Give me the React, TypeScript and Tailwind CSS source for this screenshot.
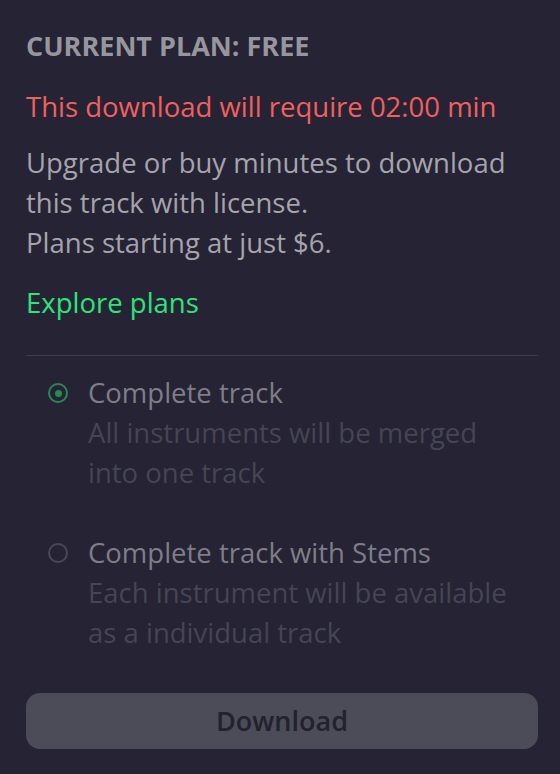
import React, { useState } from 'react';

type Option = {
  id: 'track' | 'stems';
  title: string;
  description: string;
};

const options: Option[] = [
  {
    id: 'track',
    title: 'Complete track',
    description: 'All instruments will be merged into one track',
  },
  {
    id: 'stems',
    title: 'Complete track with Stems',
    description: 'Each instrument will be available as a individual track',
  },
];

const Radio: React.FC<{ checked: boolean }> = ({ checked }) => (
  <span
    className={`mt-[10px] flex h-[20px] w-[20px] flex-shrink-0 items-center justify-center rounded-full border-2 ${
      checked ? 'border-[#2c8656]' : 'border-[#494857]'
    }`}
  >
    {checked && <span className="h-[7px] w-[7px] rounded-full bg-[#2c8656]" />}
  </span>
);

export default function App() {
  const [selected] = useState<Option['id']>('track');

  return (
    <div
      className="min-h-[774px] w-[560px] bg-[#252334] pl-[26px] pr-[22px] pt-[30px]"
      style={{ fontFamily: '"Open Sans", "Noto Sans", sans-serif' }}
    >
      {/* Plan */}
      <h2 className="text-[27px] font-bold leading-[32px] text-[#97969f]">
        CURRENT PLAN: FREE
      </h2>
      <p className="mt-[25px] text-[27.5px] leading-[40px] text-[#f0605f]">
        This download will require 02:00 min
      </p>
      <p className="mt-[16px] text-[27.5px] leading-[40px] text-[#a5a4ac]">
        Upgrade or buy minutes to download
        <br />
        this track with license.
        <br />
        Plans starting at just $6.
      </p>
      <a className="mt-[20px] block text-[27.5px] leading-[40px] text-[#2de37a]">Explore plans</a>

      <div className="mt-[32px] h-px bg-[#3d3c4b]" />

      {/* Options */}
      <div className="mt-[17px] flex flex-col gap-[40px]">
        {options.map((option) => (
          <div key={option.id} className="flex items-start gap-[20px] pl-[22px]">
            <Radio checked={selected === option.id} />
            <div className="w-[430px]">
              <div className="text-[27.5px] leading-[40px] text-[#7f7e88]">{option.title}</div>
              <div className="text-[27.5px] leading-[40px] text-[#464553]">{option.description}</div>
            </div>
          </div>
        ))}
      </div>

      <button className="mt-[40px] h-[56px] w-full rounded-[14px] bg-[#4c4b58] text-[27px] font-semibold text-[#22212d]">
        Download
      </button>
    </div>
  );
}
